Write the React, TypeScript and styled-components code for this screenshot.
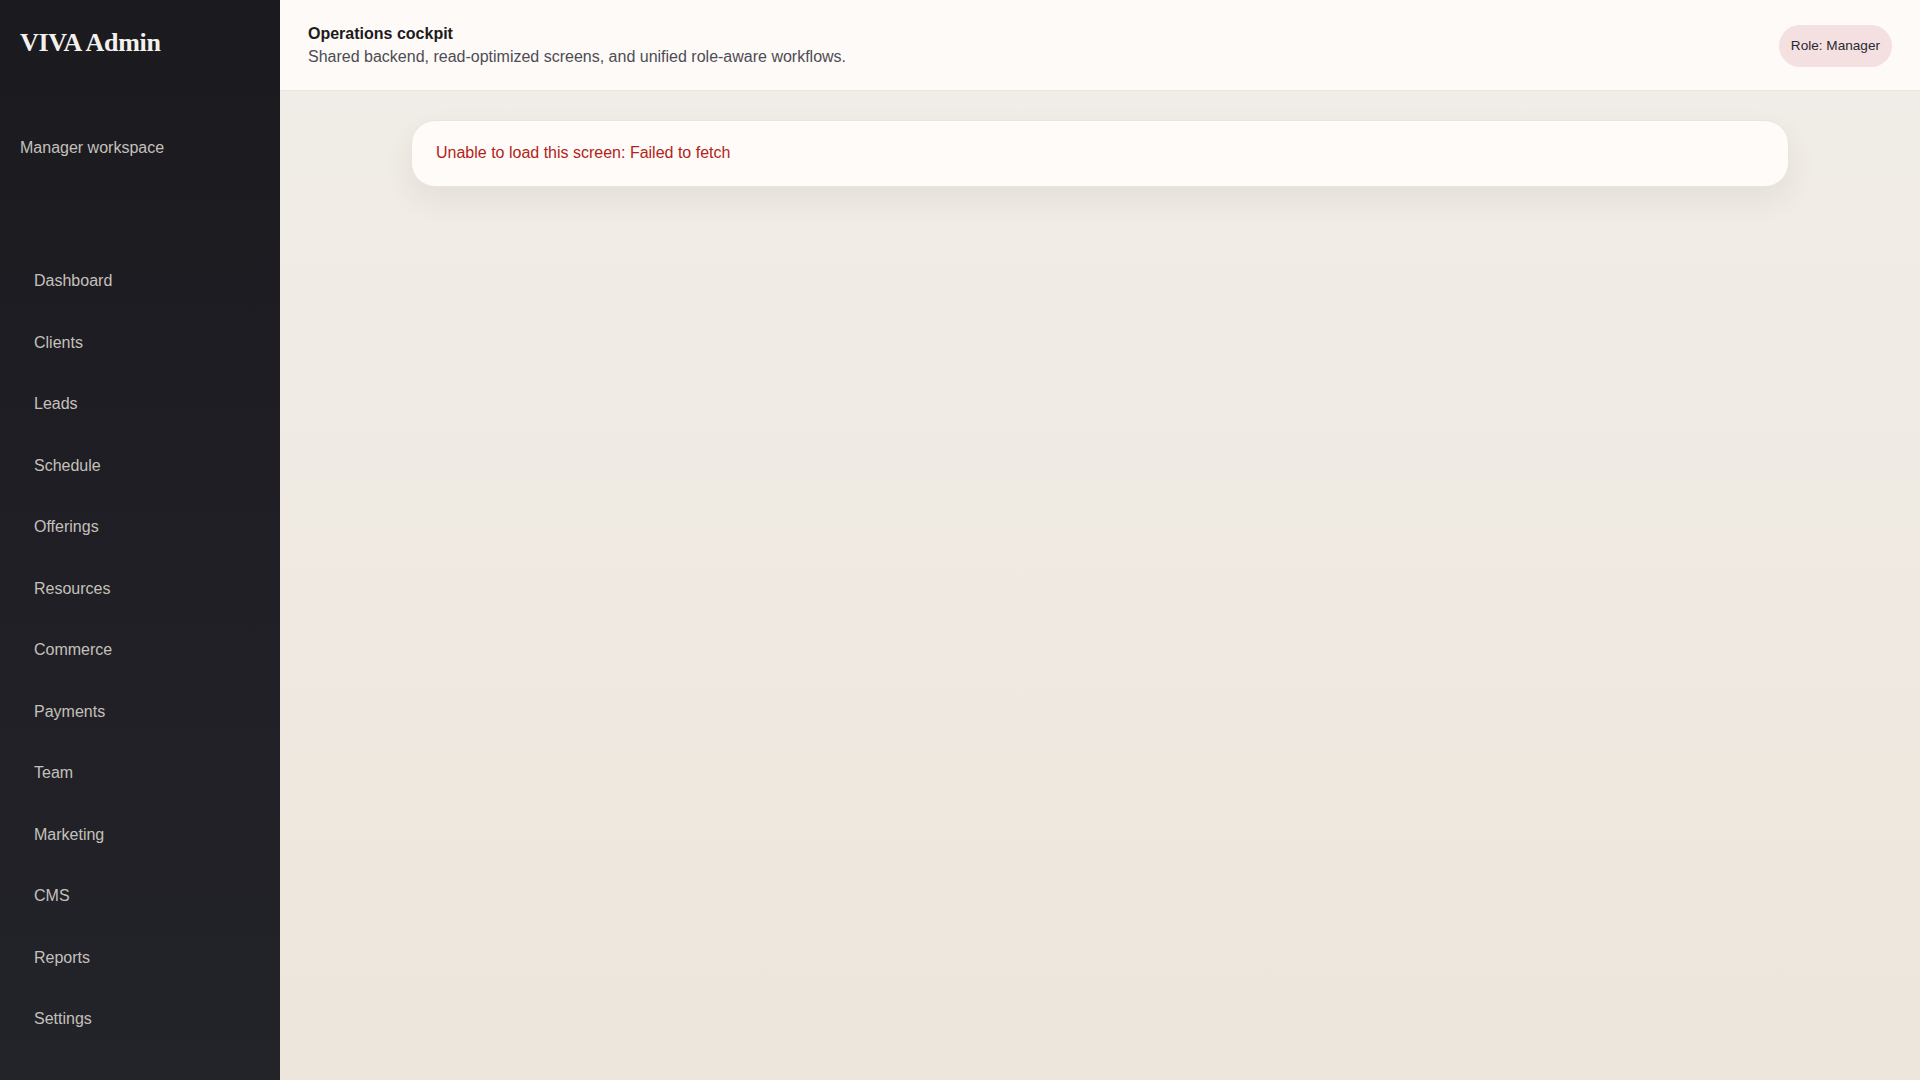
import React from 'react';
import styled, { createGlobalStyle } from 'styled-components';

const GlobalStyle = createGlobalStyle`
    html, body {
        margin: 0;
        padding: 0;
        height: 100%;
    }
    body {
        font-family: 'Liberation Sans', Arial, sans-serif;
        background: #f1ede8;
    }
    #root {
        height: 100%;
    }
`;

const Shell = styled.div`
    display: grid;
    grid-template-columns: 280px 1fr;
    min-height: 100vh;
`;

const Sidebar = styled.aside`
    display: flex;
    flex-direction: column;
    padding: 29px 20px 20px;
    background: linear-gradient(180deg, #1b1a1f 0%, #23232a 100%);
    color: #f4f1ec;
`;

const Brand = styled.h1`
    margin: 0;
    font-family: 'Liberation Serif', 'Times New Roman', serif;
    font-size: 26px;
    font-weight: 700;
    line-height: 28px;
    letter-spacing: -0.01em;
    color: #f4f1ec;
`;

const Workspace = styled.p`
    margin: 82px 0 0;
    font-size: 16px;
    line-height: 18px;
    color: #c4c1bc;
`;

const Nav = styled.nav`
    display: flex;
    flex-direction: column;
    gap: 19px;
    margin-top: 103px;
`;

const NavItem = styled.a<{ $active?: boolean }>`
    display: block;
    padding: 12px 14px;
    border-radius: 12px;
    font-size: 16px;
    line-height: 18.5px;
    color: ${p => (p.$active ? '#ffffff' : '#c4c1bc')};
    text-decoration: none;
    cursor: pointer;
`;

const Main = styled.main`
    display: flex;
    flex-direction: column;
    background: linear-gradient(180deg, #f1ede8 0%, #ede6dc 100%);
`;

const Header = styled.header`
    display: flex;
    align-items: center;
    justify-content: space-between;
    height: 91px;
    box-sizing: border-box;
    padding: 1px 28px 0;
    background: #fdfaf7;
    border-bottom: 1px solid #ebe5de;
`;

const HeaderText = styled.div`
    display: flex;
    flex-direction: column;
    gap: 5px;
`;

const Title = styled.h2`
    margin: 0;
    font-size: 16px;
    font-weight: 700;
    line-height: 18.5px;
    color: #1c1b20;
`;

const Subtitle = styled.p`
    margin: 0;
    font-size: 16px;
    line-height: 18.5px;
    color: #4e4c55;
`;

const RolePill = styled.span`
    display: inline-flex;
    align-items: center;
    height: 42px;
    box-sizing: border-box;
    padding: 0 12px;
    border-radius: 999px;
    background: #f4dfe1;
    font-size: 13.6px;
    color: #2b2a30;
`;

const Content = styled.section`
    padding: 29px 24px 24px;
`;

const ErrorCard = styled.div`
    max-width: 1378px;
    margin: 0 auto;
    box-sizing: border-box;
    padding: 23px 24px;
    border: 1px solid #ece4da;
    border-radius: 24px;
    background: #fefbf9;
    box-shadow: 0 12px 30px rgba(70, 50, 30, 0.07);
    font-size: 16px;
    line-height: 18.5px;
    color: #b42318;
`;

const navItems = [
    'Dashboard',
    'Clients',
    'Leads',
    'Schedule',
    'Offerings',
    'Resources',
    'Commerce',
    'Payments',
    'Team',
    'Marketing',
    'CMS',
    'Reports',
    'Settings',
];

const App: React.FC = () => {
    return (
        <>
            <GlobalStyle />
            <Shell>
                <Sidebar>
                    <Brand>VIVA Admin</Brand>
                    <Workspace>Manager workspace</Workspace>
                    <Nav>
                        {navItems.map(item => (
                            <NavItem key={item}>{item}</NavItem>
                        ))}
                    </Nav>
                </Sidebar>
                <Main>
                    <Header>
                        <HeaderText>
                            <Title>Operations cockpit</Title>
                            <Subtitle>
                                Shared backend, read-optimized screens, and
                                unified role-aware workflows.
                            </Subtitle>
                        </HeaderText>
                        <RolePill>Role: Manager</RolePill>
                    </Header>
                    <Content>
                        <ErrorCard>
                            Unable to load this screen: Failed to fetch
                        </ErrorCard>
                    </Content>
                </Main>
            </Shell>
        </>
    );
};

export default App;
